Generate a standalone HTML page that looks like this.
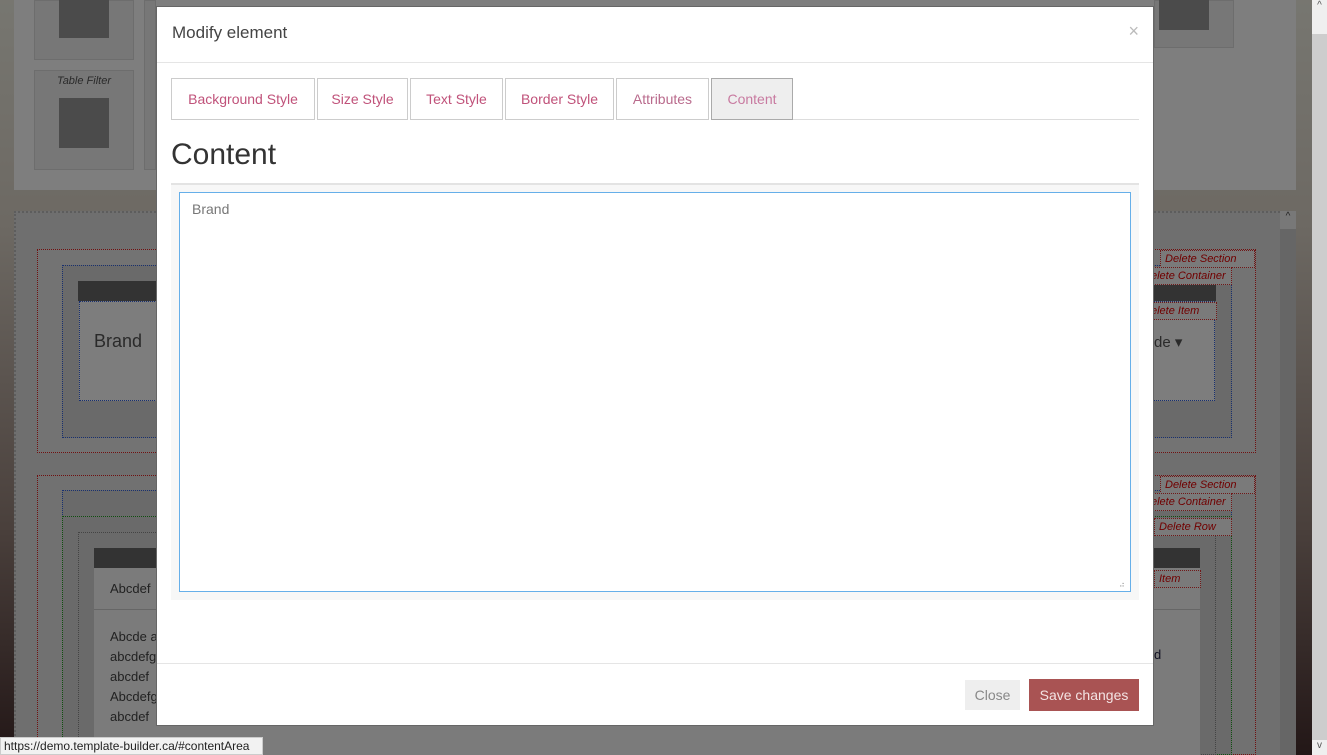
<!DOCTYPE html>
<html><head><meta charset="utf-8"><style>
*{box-sizing:border-box;margin:0;padding:0}
html,body{width:1327px;height:755px;overflow:hidden}
body{position:relative;font-family:"Liberation Sans",sans-serif;background:linear-gradient(180deg,#eeede1 0%,#dad2c6 30%,#948078 70%,#462e2e 100%)}
.a{position:absolute}
.dash{border:1px dotted}
.tab{position:absolute;top:78px;height:42px;border:1px solid #ccc;background:#fff;color:#c0527a;font-size:14px;line-height:40px;text-align:center}
.del{position:absolute;color:#e00000;font-style:italic;font-size:11px;background:#f4f4f4;border:1px dotted #e03030;padding:0 4px;line-height:16px}
</style></head><body>
<!-- background page (undimmed) -->
<div class="a" style="left:14px;top:0;width:1282px;height:190px;background:#fdfdfd"></div>
<div class="a" style="left:34px;top:0;width:100px;height:60px;background:#efefef;border:1px solid #dadada"></div>
<div class="a" style="left:59px;top:0;width:50px;height:38px;background:#979797"></div>
<div class="a" style="left:34px;top:70px;width:100px;height:100px;background:#efefef;border:1px solid #dadada"></div>
<div class="a" style="left:34px;top:75px;width:100px;text-align:center;font-size:11px;font-style:italic;color:#555">Table Filter</div>
<div class="a" style="left:59px;top:98px;width:50px;height:50px;background:#979797"></div>
<div class="a" style="left:144px;top:0;width:12px;height:170px;background:#efefef;border:1px solid #dadada"></div>
<div class="a" style="left:1154px;top:0;width:80px;height:48px;background:#efefef;border:1px solid #dadada"></div>
<div class="a" style="left:1159px;top:0;width:50px;height:30px;background:#979797"></div>
<div class="a" style="left:14px;top:211px;width:1282px;height:544px;background:#dedede;border-top:2px dotted #bbb;border-left:2px dotted #bbb"></div>
<div class="a" style="left:1280px;top:211px;width:16px;height:544px;background:#cdcdcd"></div>
<div class="a" style="left:1280px;top:211px;width:16px;height:18px;background:#f0f0f0;color:#444;font-size:10px;text-align:center">^</div>
<div class="a dash" style="left:37px;top:249px;width:1219px;height:204px;border-color:#e02020;background:#e6e6e6"></div>
<div class="a dash" style="left:62px;top:265px;width:1170px;height:173px;border-color:#3060e0;background:#d4d4d4"></div>
<div class="a" style="left:78px;top:281px;width:1138px;height:20px;background:#666"></div>
<div class="a dash" style="left:79px;top:301px;width:1136px;height:100px;border-color:#3060e0;background:#fafafa"></div>
<div class="a" style="left:94px;top:331px;font-size:18px;color:#555">Brand</div>
<div class="a" style="left:1154px;top:333px;font-size:15px;color:#555">de ▾</div>
<div class="del" style="left:1160px;top:250px;width:95px">Delete Section</div>
<div class="del" style="left:1146px;top:267px;width:86px">elete Container</div>
<div class="del" style="left:1146px;top:302px;width:71px">elete Item</div>
<div class="a dash" style="left:37px;top:475px;width:1219px;height:280px;border-color:#e02020;background:#e2e2e2"></div>
<div class="a dash" style="left:62px;top:490px;width:1170px;height:265px;border-color:#3060e0;background:#d4d4d4"></div>
<div class="a dash" style="left:62px;top:516px;width:1170px;height:239px;border-color:#20a020"></div>
<div class="a dash" style="left:78px;top:532px;width:1138px;height:223px;border-color:#888"></div>
<div class="a" style="left:94px;top:548px;width:1106px;height:20px;background:#666"></div>
<div class="a" style="left:94px;top:568px;width:1106px;height:187px;background:#f6f6f6"></div>
<div class="a" style="left:94px;top:609px;width:1106px;height:1px;background:#ccc"></div>
<div class="a" style="left:110px;top:581px;font-size:13px;color:#444">Abcdef</div>
<div class="a" style="left:110px;top:627px;font-size:13px;color:#444;line-height:20px">Abcde a<br>abcdefg<br>abcdef<br>Abcdefg<br>abcdef</div>
<div class="a" style="left:1154px;top:647px;font-size:13px;color:#224">d</div>
<div class="del" style="left:1160px;top:476px;width:95px">Delete Section</div>
<div class="del" style="left:1146px;top:493px;width:86px">elete Container</div>
<div class="del" style="left:1154px;top:518px;width:78px">Delete Row</div>
<div class="del" style="left:1154px;top:570px;width:47px">Item</div>
<!-- backdrop -->
<div class="a" style="left:0;top:0;width:1312px;height:755px;background:rgba(0,0,0,0.5)"></div>
<div class="a" style="left:1312px;top:0;width:15px;height:755px;background:#cdcdcd"></div>
<div class="a" style="left:1312px;top:0;width:15px;height:34px;background:#efefef;color:#555;font-size:10px;text-align:center">^</div>
<div class="a" style="left:1312px;top:740px;width:15px;height:15px;background:#efefef;color:#555;font-size:10px;text-align:center">v</div>
<!-- modal -->
<div class="a" style="left:156px;top:6px;width:998px;height:720px;background:#fff;border:1px solid #666">
 <div class="a" style="left:15px;top:16px;font-size:17px;color:#444">Modify element</div>
 <div class="a" style="right:14px;top:14px;font-size:18px;color:#bbb">×</div>
 <div class="a" style="left:0;top:55px;width:996px;height:1px;background:#e5e5e5"></div>
</div>
<div class="tab" style="left:171px;width:144px">Background Style</div>
<div class="tab" style="left:317px;width:91px">Size Style</div>
<div class="tab" style="left:410px;width:93px">Text Style</div>
<div class="tab" style="left:505px;width:109px">Border Style</div>
<div class="tab" style="left:616px;width:93px;color:#b96a8c">Attributes</div>
<div class="tab" style="left:711px;width:82px;background:#eee;border-color:#aaa;color:#c87aa0">Content</div>
<div class="a" style="left:793px;top:119px;width:346px;height:1px;background:#ddd"></div>
<div class="a" style="left:171px;top:138px;font-size:30px;color:#333;font-weight:300">Content</div>
<div class="a" style="left:171px;top:183px;width:968px;height:417px;background:#f7f7f7;border-top:2px solid #e3e3e3"></div>
<div class="a" style="left:179px;top:192px;width:952px;height:400px;background:#fff;border:1px solid #66afe9"></div>
<div class="a" style="left:192px;top:201px;font-size:14px;color:#777">Brand</div>
<div class="a" style="left:1119px;top:580px;font-size:8px;color:#999">⠴</div>
<div class="a" style="left:157px;top:663px;width:996px;height:1px;background:#e5e5e5"></div>
<div class="a" style="left:965px;top:680px;width:55px;height:30px;background:#eee;color:#888;font-size:14px;line-height:30px;text-align:center">Close</div>
<div class="a" style="left:1029px;top:679px;width:110px;height:32px;background:#a95353;color:#f3e3e3;font-size:14px;line-height:32px;text-align:center">Save changes</div>
<!-- status bar -->
<div class="a" style="left:0;top:737px;width:263px;height:18px;background:#f2f2f2;border:1px solid #ccc;font-size:12px;line-height:16px;padding-left:3px;color:#222">https://demo.template-builder.ca/#contentArea</div>
</body></html>
